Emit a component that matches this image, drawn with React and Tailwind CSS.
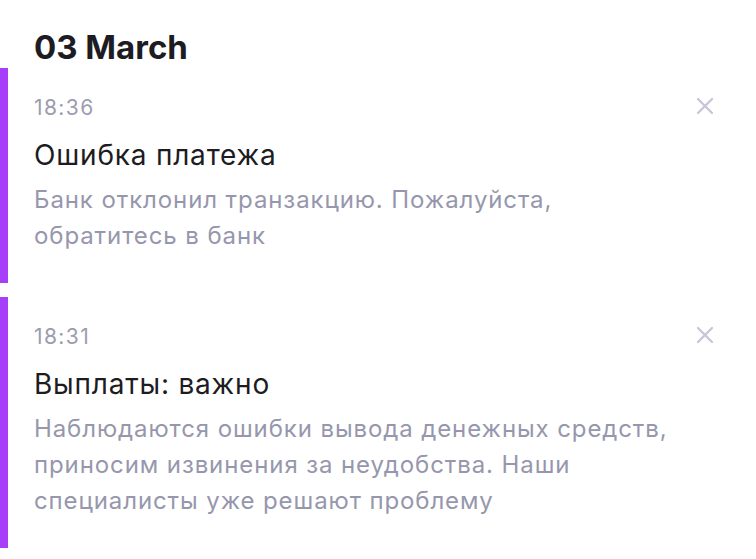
import React from 'react';

const items = [
  {
    time: '18:36',
    title: 'Ошибка платежа',
    text: 'Банк отклонил транзакцию. Пожалуйста, обратитесь в банк',
  },
  {
    time: '18:31',
    title: 'Выплаты: важно',
    text: 'Наблюдаются ошибки вывода денежных средств, приносим извинения за неудобства. Наши специалисты уже решают проблему',
  },
];

const CloseIcon = () => (
  <svg width="18" height="18" viewBox="0 0 18 18" fill="none">
    <path d="M2 2L16 16M16 2L2 16" stroke="#c6c6da" strokeWidth="2.3" strokeLinecap="round" />
  </svg>
);

const App = () => {
  return (
    <div className="min-h-screen bg-white pt-[26px] font-['Inter',sans-serif]">
      {/* Date header */}
      <h2 className="pl-[34px] text-[33px] font-bold leading-[42px] text-[#1c1c22]">03 March</h2>

      <div className="flex flex-col gap-[14px]">
        {items.map((item) => (
          <div key={item.time} className="flex border-l-[8px] border-[#a73ffa] pl-[26px] pr-[42px] pt-[26px] pb-[29px]">
            <div className="flex-1">
              <div className="text-[21px] leading-[28px] tracking-[1.4px] text-[#9c9cb0]">{item.time}</div>
              <div className="mt-[15px] text-[28px] leading-[36px] tracking-[0.8px] text-[#1c1c22]">{item.title}</div>
              <p className="mt-[9px] max-w-[645px] text-[24px] leading-[36px] tracking-[0.9px] text-[#9697ad]">{item.text}</p>
            </div>
            <button className="mt-[3px] h-[18px] w-[18px]">
              <CloseIcon />
            </button>
          </div>
        ))}
      </div>
    </div>
  );
};

export default App;
